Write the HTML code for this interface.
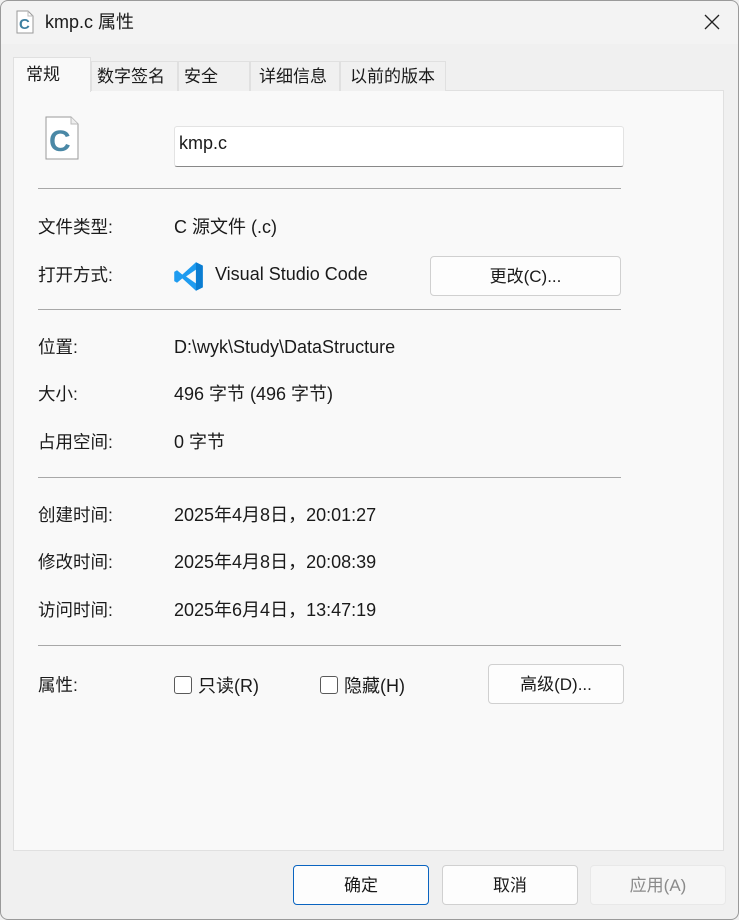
<!DOCTYPE html>
<html><head><meta charset="utf-8"><style>
*{margin:0;padding:0;box-sizing:border-box}
body{width:739px;height:920px;background:#f0f0f0;font-family:"Liberation Sans","Noto Sans CJK SC",sans-serif;color:#1a1a1a;position:relative;overflow:hidden;font-size:16px}
.frame{position:absolute;left:0;top:0;width:739px;height:920px;border:1px solid #9a9a9a;border-radius:8px;pointer-events:none}
.title{position:absolute;left:0;top:0;width:739px;height:44px;background:#f3f3f3;border-radius:8px 8px 0 0}
.abs{position:absolute;white-space:nowrap;line-height:1.2}
.panel{position:absolute;left:13px;top:90px;width:711px;height:761px;background:#f9f9f9;border:1px solid #e0e0e0}
.tab{position:absolute;top:61px;height:30px;background:#f0f0f0;border:1px solid #e0e0e0;border-bottom:none;font-size:17px;padding:5px 0 0 5px;line-height:1.2}
.hr{position:absolute;left:38px;width:583px;height:1px;background:#a8a8a8}
.btn{position:absolute;height:40px;background:#fdfdfd;border:1px solid #d0d0d0;border-radius:4px;text-align:center;line-height:40px;font-size:17px}
.cb{position:absolute;width:18px;height:18px;border:1px solid #5a5a5a;border-radius:3px;background:#fff}
.lab{position:absolute;left:38px;font-size:17.5px;line-height:1.2;white-space:nowrap}
.val{position:absolute;left:174px;font-size:18px;line-height:1.2;white-space:nowrap}
</style></head><body>
<div class="title"></div>
<svg class="abs" style="left:16px;top:10px" width="18" height="24" viewBox="0 0 18 24"><path d="M1 1h11l5 5v17H1z" fill="#fff" stroke="#9a9a9a"/><path d="M12 1v5h5" fill="none" stroke="#bbb"/><text x="3" y="19" font-family="Liberation Sans" font-weight="bold" font-size="15" fill="#3d7fa0">C</text></svg>
<div class="abs" style="left:45px;top:12px;font-size:18px">kmp.c 属性</div>
<svg class="abs" style="left:704px;top:14px" width="16" height="16"><path d="M1 1L15 15M15 1L1 15" stroke="#222" stroke-width="1.3"/></svg>

<div class="panel"></div>
<div class="tab" style="left:91px;width:87px">数字签名</div>
<div class="tab" style="left:178px;width:72px">安全</div>
<div class="tab" style="left:250px;width:90px;padding-left:8px">详细信息</div>
<div class="tab" style="left:340px;width:106px;padding-left:9px">以前的版本</div>
<div class="tab" style="left:13px;top:57px;width:78px;height:35px;background:#f9f9f9;padding:7px 0 0 12px">常规</div>

<svg class="abs" style="left:45px;top:116px" width="34" height="44" viewBox="0 0 34 44"><path d="M1 1h25l7 7v35H1z" fill="#fff" stroke="#9a9a9a"/><path d="M26 1v7h7" fill="#eee" stroke="#bbb"/><text x="4" y="35" font-family="Liberation Sans" font-weight="bold" font-size="30" fill="#4a88a6">C</text></svg>
<div class="abs" style="left:174px;top:126px;width:450px;height:41px;background:#fff;border:1px solid #e3e3e3;border-bottom:1px solid #888;border-radius:3px;font-size:18px;padding:6px 0 0 4px">kmp.c</div>

<div class="hr" style="top:188px"></div>
<div class="lab" style="top:217px">文件类型:</div><div class="val" style="top:217px">C 源文件 (.c)</div>
<div class="lab" style="top:265px">打开方式:</div>
<svg class="abs" style="left:173px;top:261px" width="31" height="31" viewBox="0 0 100 100"><path d="M74 4L96 15v70L74 96 30 56 13 70 4 65V35l9-5 17 14z" fill="#1f9cf0"/><path d="M74 28L42 50l32 22z" fill="#f9f9f9"/><path d="M74 4l22 11v70L74 96z" fill="#0b7dd1"/></svg>
<div class="abs" style="left:215px;top:264px;font-size:18px">Visual Studio Code</div>
<div class="btn" style="left:430px;top:256px;width:191px">更改(C)...</div>

<div class="hr" style="top:309px"></div>
<div class="lab" style="top:337px">位置:</div><div class="val" style="top:337px">D:\wyk\Study\DataStructure</div>
<div class="lab" style="top:384px">大小:</div><div class="val" style="top:384px">496 字节 (496 字节)</div>
<div class="lab" style="top:432px">占用空间:</div><div class="val" style="top:432px">0 字节</div>

<div class="hr" style="top:477px"></div>
<div class="lab" style="top:505px">创建时间:</div><div class="val" style="top:505px">2025年4月8日，20:01:27</div>
<div class="lab" style="top:552px">修改时间:</div><div class="val" style="top:552px">2025年4月8日，20:08:39</div>
<div class="lab" style="top:600px">访问时间:</div><div class="val" style="top:600px">2025年6月4日，13:47:19</div>

<div class="hr" style="top:645px"></div>
<div class="lab" style="top:675px">属性:</div>
<div class="cb" style="left:174px;top:676px"></div><div class="abs" style="left:198px;top:676px;font-size:18px">只读(R)</div>
<div class="cb" style="left:320px;top:676px"></div><div class="abs" style="left:344px;top:676px;font-size:18px">隐藏(H)</div>
<div class="btn" style="left:488px;top:664px;width:136px">高级(D)...</div>

<div class="btn" style="left:293px;top:865px;width:136px;border-color:#0a64c0">确定</div>
<div class="btn" style="left:442px;top:865px;width:136px">取消</div>
<div class="btn" style="left:590px;top:865px;width:136px;background:#f6f6f6;border-color:#e8e8e8;color:#8a8a8a">应用(A)</div>
<div class="frame"></div>
</body></html>
